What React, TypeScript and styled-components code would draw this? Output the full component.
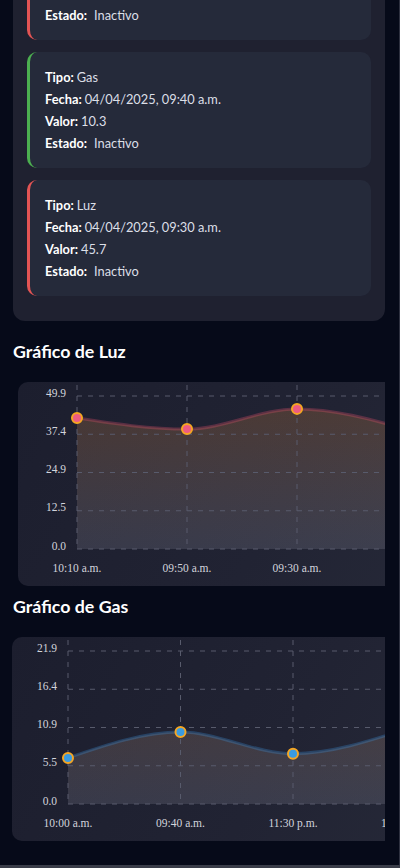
import React from "react";
import styled, { createGlobalStyle } from "styled-components";

const GlobalStyle = createGlobalStyle`
  html, body { margin: 0; padding: 0; background: #060a19; }
  body { font-family: Lato, "Noto Sans", Arial, sans-serif; color: #e6e8ef; overflow: hidden; }
  * { box-sizing: border-box; }
`;

const Column = styled.div`
  width: 385px;
  padding-left: 13px;
  overflow: hidden;
  display: flex;
  flex-direction: column;
`;

const Panel = styled.section`
  margin-top: -90px;
  margin-bottom: 10px;
  width: 372px;
  background: #1f2130;
  border-radius: 12px;
  padding: 14px 14px 25px;
  display: flex;
  flex-direction: column;
  gap: 12px;
`;

const Card = styled.div<{ $accent: string }>`
  background: #252a3a;
  border-left: 3px solid ${(p) => p.$accent};
  border-radius: 10px;
  padding: 14px 15px;
  display: flex;
  flex-direction: column;
`;

const Line = styled.div`
  font-size: 12.8px;
  line-height: 22px;
  color: #dcdfe7;
  white-space: nowrap;
`;

const Label = styled.b`
  color: #ffffff;
  font-weight: 700;
  margin-right: 3px;
`;

const Status = styled.span`
  margin-left: 4px;
`;

const Heading = styled.h2`
  margin: 8px 0 19px;
  font-size: 17.8px;
  line-height: 24px;
  font-weight: 700;
  color: #ffffff;
`;

const ChartBox = styled.div<{ $shift: number }>`
  flex-shrink: 0;
  width: 440px;
  height: 204px;
  margin-left: ${(p) => p.$shift}px;
  border-radius: 10px;
  background: linear-gradient(120deg, #1c1e2e 0%, #212333 60%, #262938 100%);
  overflow: hidden;
`;

const ScrollBottom = styled.div`
  position: fixed;
  left: 0;
  right: 0;
  bottom: 0;
  height: 3px;
  background: #3a3d49;
`;

const ScrollSide = styled.div`
  position: fixed;
  top: 0;
  right: 0;
  bottom: 0;
  width: 1px;
  background: #2e3140;
`;

type Reading = { tipo: string; fecha: string; valor: string; color: string };

const readings: Reading[] = [
  { tipo: "Luz", fecha: "04/04/2025, 09:50 a.m.", valor: "39.1", color: "#e35454" },
  { tipo: "Gas", fecha: "04/04/2025, 09:40 a.m.", valor: "10.3", color: "#4caf50" },
  { tipo: "Luz", fecha: "04/04/2025, 09:30 a.m.", valor: "45.7", color: "#e35454" },
];

function monotonePath(pts: [number, number][]): string {
  const n = pts.length;
  const s: number[] = [];
  for (let i = 0; i < n - 1; i++) {
    s.push((pts[i + 1][1] - pts[i][1]) / (pts[i + 1][0] - pts[i][0]));
  }
  const m: number[] = new Array(n).fill(0);
  for (let i = 1; i < n - 1; i++) {
    const h0 = pts[i][0] - pts[i - 1][0];
    const h1 = pts[i + 1][0] - pts[i][0];
    const s0 = s[i - 1];
    const s1 = s[i];
    const p = (s0 * h1 + s1 * h0) / (h0 + h1);
    m[i] = (Math.sign(s0) + Math.sign(s1)) * Math.min(Math.abs(s0), Math.abs(s1), 0.5 * Math.abs(p)) || 0;
  }
  m[0] = (3 * s[0] - m[1]) / 2;
  m[n - 1] = (3 * s[n - 2] - m[n - 2]) / 2;
  let d = `M${pts[0][0]},${pts[0][1]}`;
  for (let i = 0; i < n - 1; i++) {
    const [x0, y0] = pts[i];
    const [x1, y1] = pts[i + 1];
    const dx = (x1 - x0) / 3;
    d += ` C${x0 + dx},${y0 + dx * m[i]} ${x1 - dx},${y1 - dx * m[i + 1]} ${x1},${y1}`;
  }
  return d;
}

type ChartProps = {
  id: string;
  values: number[];
  labels: string[];
  max: number;
  ticks: string[];
  x0: number;
  step: number;
  line: string;
  dot: string;
};

const TOP = 14;
const BOTTOM = 167;

function Chart({ id, values, labels, max, ticks, x0, step, line, dot }: ChartProps) {
  const pts: [number, number][] = values.map((v, i) => [x0 + i * step, BOTTOM - (v / max) * (BOTTOM - TOP)]);
  const path = monotonePath(pts);
  const area = `${path} L${pts[pts.length - 1][0]},${BOTTOM} L${pts[0][0]},${BOTTOM} Z`;
  const gridY = ticks.map((_, i) => TOP + (i * (BOTTOM - TOP)) / (ticks.length - 1));
  return (
    <svg width="440" height="204" viewBox="0 0 440 204">
      <defs>
        <linearGradient id={`fill-${id}`} gradientUnits="userSpaceOnUse" x1="0" y1="20" x2="0" y2={BOTTOM}>
          <stop offset="0%" stopColor="#ff9a3c" stopOpacity="0.2" />
          <stop offset="100%" stopColor="#c8c8d8" stopOpacity="0.15" />
        </linearGradient>
      </defs>
      <path d={area} fill={`url(#fill-${id})`} />
      {gridY.map((y, i) => (
        <line key={`h${i}`} x1={x0} x2={440} y1={y} y2={y} stroke="#585b6c" strokeWidth="1" strokeDasharray="5 6" />
      ))}
      {values.map((_, i) => (
        <line key={`v${i}`} x1={x0 + i * step} x2={x0 + i * step} y1={3} y2={BOTTOM} stroke="#585b6c" strokeWidth="1" strokeDasharray="5 6" />
      ))}
      <path d={path} fill="none" stroke={line} strokeOpacity="0.3" strokeWidth="3" />
      {pts.map(([x, y], i) => (
        <circle key={`d${i}`} cx={x} cy={y} r="5" fill={dot} stroke="#f5a623" strokeWidth="2" />
      ))}
      {ticks.map((t, i) => (
        <text
          key={`t${i}`}
          x={x0 - 11}
          y={gridY[i] + 0.5}
          textAnchor="end"
          fontFamily="'Liberation Serif', serif"
          fontSize="11.5"
          fill="#d2d4dc"
        >
          {t}
        </text>
      ))}
      {labels.map((l, i) => (
        <text
          key={`l${i}`}
          x={x0 + i * step}
          y={190}
          textAnchor="middle"
          fontFamily="'Liberation Serif', serif"
          fontSize="11.5"
          fill="#d2d4dc"
        >
          {l}
        </text>
      ))}
    </svg>
  );
}

export default function App() {
  return (
    <>
      <GlobalStyle />
      <Column>
        <Panel>
          {readings.map((r, i) => (
            <Card key={i} $accent={r.color}>
              <Line>
                <Label>Tipo:</Label>
                {r.tipo}
              </Line>
              <Line>
                <Label>Fecha:</Label>
                {r.fecha}
              </Line>
              <Line>
                <Label>Valor:</Label>
                {r.valor}
              </Line>
              <Line>
                <Label>Estado:</Label>
                <Status>Inactivo</Status>
              </Line>
            </Card>
          ))}
        </Panel>
        <Heading>Gráfico de Luz</Heading>
        <ChartBox $shift={5}>
          <Chart
            id="luz"
            values={[42.7, 39.1, 45.7, 39.0]}
            labels={["10:10 a.m.", "09:50 a.m.", "09:30 a.m."]}
            max={49.9}
            ticks={["49.9", "37.4", "24.9", "12.5", "0.0"]}
            x0={59}
            step={110}
            line="#e0506e"
            dot="#ee5b82"
          />
        </ChartBox>
        <Heading>Gráfico de Gas</Heading>
        <ChartBox $shift={-1}>
          <Chart
            id="gas"
            values={[6.6, 10.3, 7.2, 10.7]}
            labels={["10:00 a.m.", "09:40 a.m.", "11:30 p.m.", "11:20 p.m."]}
            max={21.9}
            ticks={["21.9", "16.4", "10.9", "5.5", "0.0"]}
            x0={56}
            step={112.5}
            line="#3a8fd8"
            dot="#3a9be0"
          />
        </ChartBox>
      </Column>
      <ScrollSide />
      <ScrollBottom />
    </>
  );
}
